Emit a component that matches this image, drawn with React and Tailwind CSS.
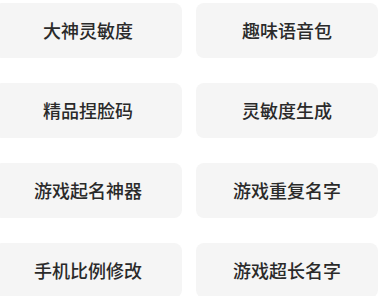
const items = [
  "大神灵敏度",
  "趣味语音包",
  "精品捏脸码",
  "灵敏度生成",
  "游戏起名神器",
  "游戏重复名字",
  "手机比例修改",
  "游戏超长名字",
];

export default function App() {
  return (
    <div className="w-[381px] h-[296px] overflow-hidden bg-white pt-[3px] font-['Noto_Sans_CJK_SC',sans-serif]">
      <div className="ml-[-6px] grid grid-cols-[188px_182px] gap-x-[14px] gap-y-[25px]">
        {items.map((t) => (
          <div
            key={t}
            className="h-[55px] rounded-lg bg-[#f5f5f5] flex items-center justify-center text-[18px] font-medium text-[#2a2a2a]"
          >
            {t}
          </div>
        ))}
      </div>
    </div>
  );
}
